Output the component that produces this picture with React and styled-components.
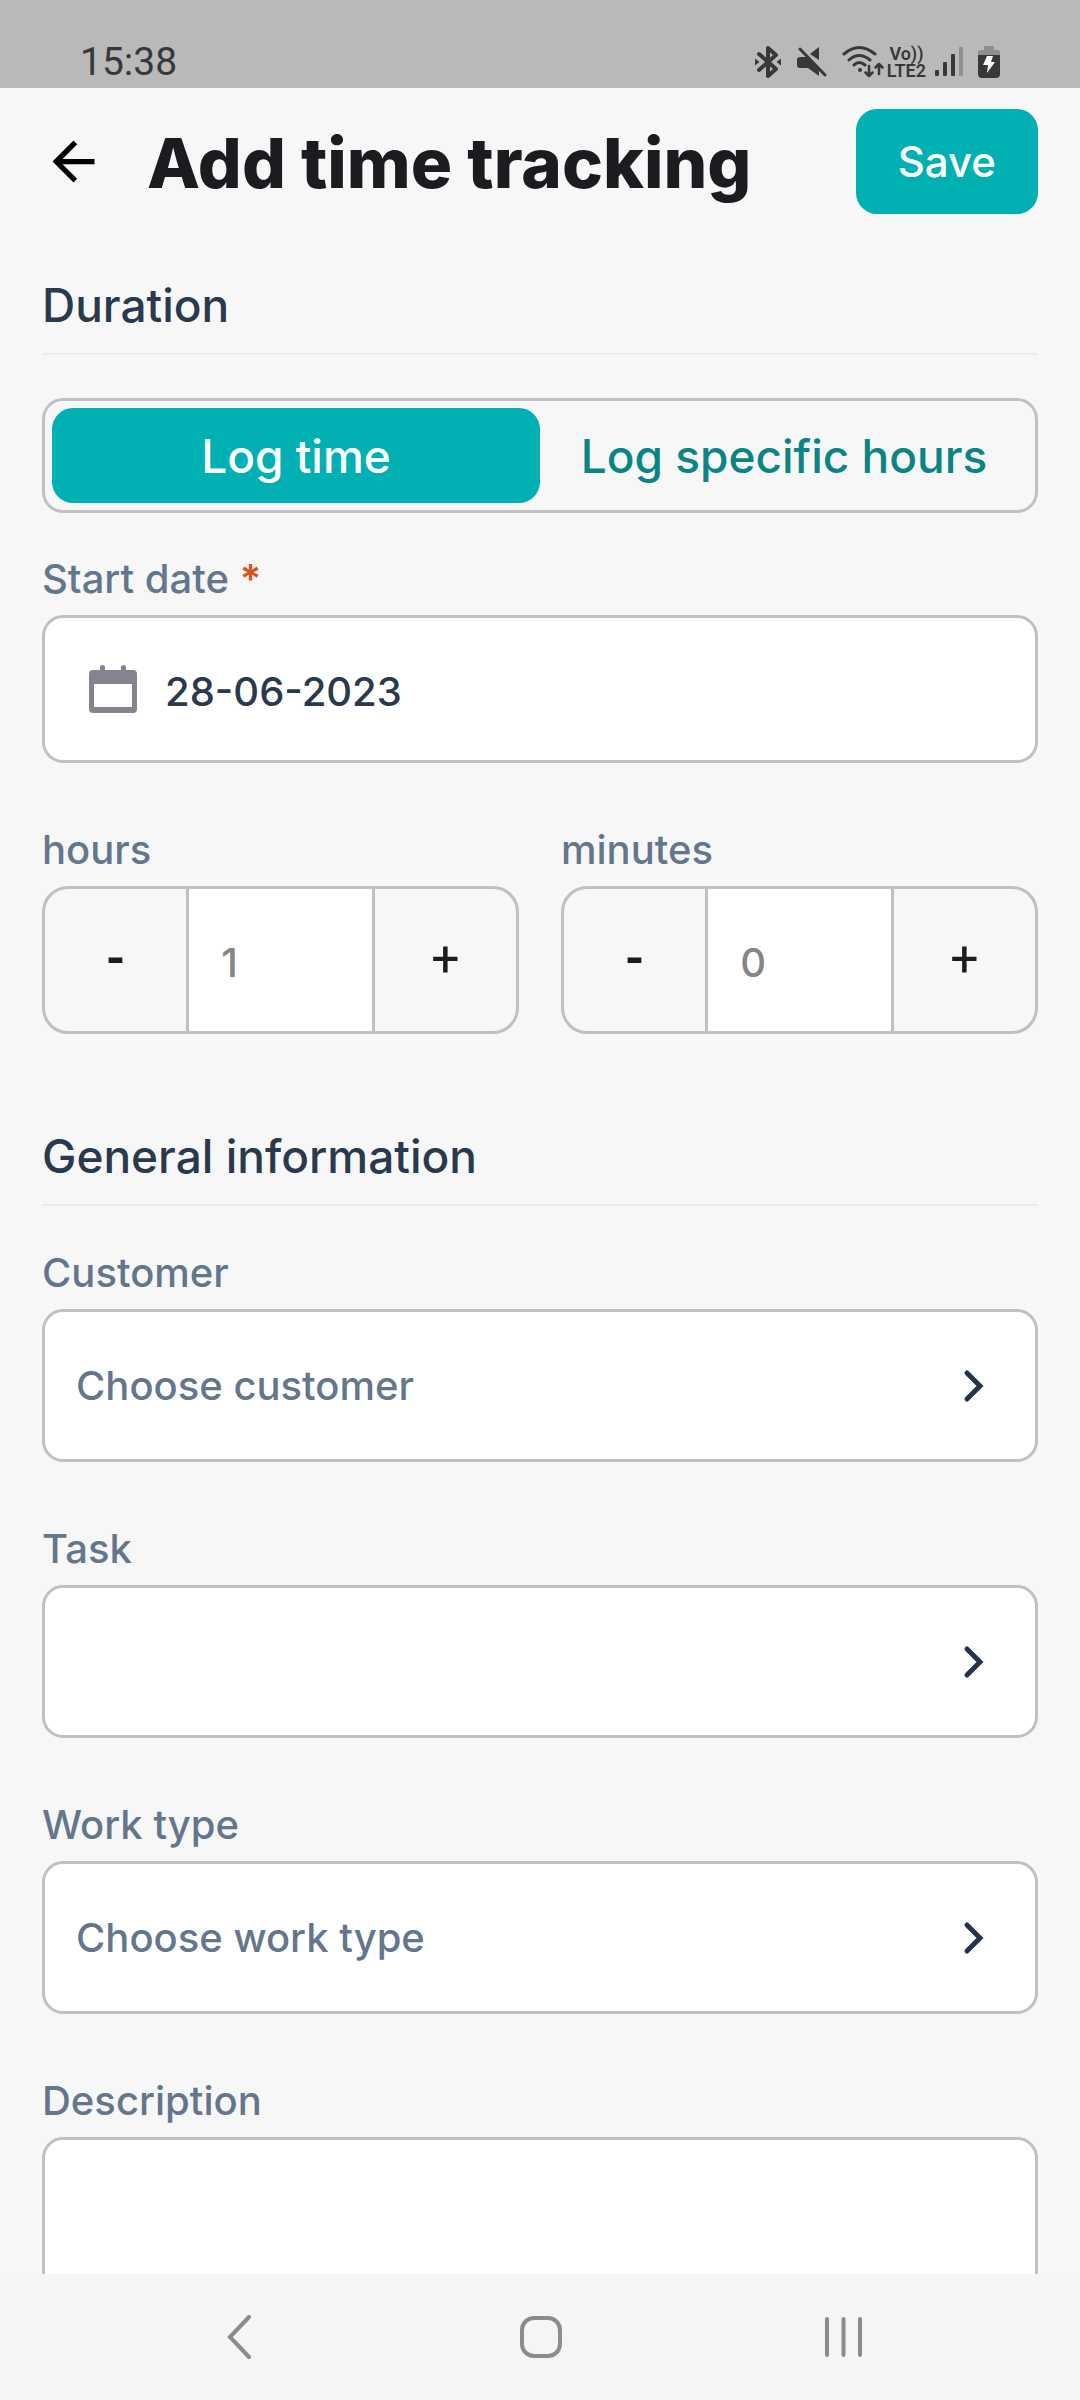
import { useState } from 'react'
import styled, { createGlobalStyle } from 'styled-components'

const workTypes = ['Development', 'Meeting', 'Support']
const customers = ['Internal']

function StatusIcons() {
    return (
        <Icons>
            <svg width="28" height="34" viewBox="0 0 28 34" fill="none" stroke="#383838" strokeWidth="4" strokeLinejoin="round" strokeLinecap="round">
                <path d="M5 9L22 24L14 31V3L22 10L5 25" />
                <path d="M1 13.500L5.500 17L1 20.500ZM27 13.500L22.500 17L27 20.500Z" fill="#383838" stroke="none" />
            </svg>
            <svg width="30" height="32" viewBox="0 0 30 32" fill="#383838">
                <path d="M22 1V14L13 8ZM3 11H10L22 22V30L11 22H3Q0 22 0 19V14Q0 11 3 11Z" />
                <path d="M3 3L28 29" fill="none" stroke="#383838" strokeWidth="3" strokeLinecap="round" />
            </svg>
            <svg width="42" height="34" viewBox="0 0 42 34" fill="none" stroke="#383838" strokeWidth="3" strokeLinecap="round" strokeLinejoin="round">
                <path d="M2 9Q17 -4 33 9M7 15Q17 6 28 15M12 20Q17 15 23 20" />
                <circle cx="18" cy="25" r="2" fill="#383838" stroke="none" />
                <path d="M27 21V31M23.500 27.500L27 31L30.500 27.500M37 29V19M33.500 22.500L37 19L40.500 22.500" strokeWidth="2.500" />
            </svg>
            <Network>
                <span>Vo))</span>
                <span>LTE2</span>
            </Network>
            <svg width="28" height="32" viewBox="0 0 28 32" fill="#383838">
                <rect x="0" y="24" width="4" height="6" rx="1" />
                <rect x="8" y="16" width="4" height="14" rx="1" />
                <rect x="16" y="8" width="4" height="22" rx="1" />
                <rect x="24" y="1" width="4" height="29" rx="1" fill="#8f8f8f" />
            </svg>
            <svg width="22" height="34" viewBox="0 0 22 34">
                <path d="M6 1H16V5H20Q22 5 22 7V12H0V7Q0 5 2 5H6Z" fill="#8f8f8f" />
                <path d="M0 10H22V29Q22 33 18 33H4Q0 33 0 29Z" fill="#383838" />
                <path d="M9 11H15L13 17H17L9 28L10 20H5Z" fill="#fff" />
            </svg>
        </Icons>
    )
}

function Stepper({ id, label, value, onChange }) {
    return (
        <Field>
            <Label htmlFor={id}>{label}</Label>
            <StepperBox>
                <StepButton type="button" $bold aria-label={`Decrease ${label}`} onClick={() => onChange(Math.max(0, value - 1))}>-</StepButton>
                <StepInput id={id} inputMode="numeric" value={value} onChange={(e) => onChange(Number(e.target.value) || 0)} />
                <StepButton type="button" aria-label={`Increase ${label}`} onClick={() => onChange(value + 1)}>+</StepButton>
            </StepperBox>
        </Field>
    )
}

function SelectField({ id, label, placeholder, options }) {
    return (
        <Field>
            <Label htmlFor={id}>{label}</Label>
            <SelectBox>
                <select id={id} defaultValue="">
                    <option value="">{placeholder}</option>
                    {options.map((option) => <option key={option}>{option}</option>)}
                </select>
                <svg width="22" height="34" viewBox="0 0 22 34" fill="none" stroke="#263449" strokeWidth="5" strokeLinecap="round">
                    <path d="M5 4L18 17L5 30" />
                </svg>
            </SelectBox>
        </Field>
    )
}

export default function App() {

    const [mode, setMode] = useState('time')
    const [date, setDate] = useState('28-06-2023')
    const [hours, setHours] = useState(1)
    const [minutes, setMinutes] = useState(0)

    return (
        <Screen>
            <GlobalStyle />
            <StatusBar>
                <span>15:38</span>
                <StatusIcons />
            </StatusBar>
            <Header>
                <BackButton type="button" aria-label="Back">
                    <svg width="63" height="63" viewBox="0 0 24 24">
                        <path d="M20 11H7.830l5.590-5.590L12 4l-8 8 8 8 1.410-1.410L7.830 13H20v-2z" />
                    </svg>
                </BackButton>
                <h1>Add time tracking</h1>
                <SaveButton type="button">Save</SaveButton>
            </Header>
            <Form>
                <SectionTitle>Duration</SectionTitle>
                <Segments>
                    <Segment type="button" aria-pressed={mode === 'time'} $active={mode === 'time'} onClick={() => setMode('time')}>Log time</Segment>
                    <Segment type="button" aria-pressed={mode === 'hours'} $active={mode === 'hours'} onClick={() => setMode('hours')}>Log specific hours</Segment>
                </Segments>
                <Fields>
                    <Field>
                        <Label htmlFor="start">Start date <b>*</b></Label>
                        <DateBox>
                            <svg width="48" height="48" viewBox="0 0 48 48" fill="#85838d">
                                <path fillRule="evenodd" d="M4 5H11V2.500A2.500 2.500 0 0 1 16 2.500V5H32V2.500A2.500 2.500 0 0 1 37 2.500V5H44Q48 5 48 9V44Q48 48 44 48H4Q0 48 0 44V9Q0 5 4 5ZM5 19V42H43V19Z" />
                            </svg>
                            <input id="start" value={date} onChange={(e) => setDate(e.target.value)} />
                        </DateBox>
                    </Field>
                    <Pair>
                        <Stepper id="hours" label="hours" value={hours} onChange={setHours} />
                        <Stepper id="minutes" label="minutes" value={minutes} onChange={setMinutes} />
                    </Pair>
                </Fields>
                <SectionTitle $spaced>General information</SectionTitle>
                <Fields>
                    <SelectField id="customer" label="Customer" placeholder="Choose customer" options={customers} />
                    <SelectField id="task" label="Task" placeholder="" options={[]} />
                    <SelectField id="worktype" label="Work type" placeholder="Choose work type" options={workTypes} />
                    <Field>
                        <Label htmlFor="description">Description</Label>
                        <TextArea id="description" />
                    </Field>
                </Fields>
            </Form>
            <NavBar>
                <button type="button" aria-label="Back">
                    <svg width="44" height="44" viewBox="0 0 44 44"><path d="M31 2L12 22L31 42" /></svg>
                </button>
                <button type="button" aria-label="Home">
                    <svg width="44" height="44" viewBox="0 0 44 44"><rect x="4" y="3" width="38" height="38" rx="12" /></svg>
                </button>
                <button type="button" aria-label="Recent apps">
                    <svg width="44" height="44" viewBox="0 0 44 44"><path d="M9 4V40M25.500 4V40M42 4V40" /></svg>
                </button>
            </NavBar>
        </Screen>
    )
}

const GlobalStyle = createGlobalStyle`
    *{
        box-sizing: border-box;
    }

    body{
        margin: 0;
        background-color: #f7f7f8;
    }

    body, button, input, select, textarea{
        font-family: Inter, sans-serif;
        font-size: 40px;
        font-weight: 500;
    }

    button{
        padding: 0;
        border: none;
        background: none;
        cursor: pointer;
    }

    svg{
        display: block;
        flex-shrink: 0;
    }
`

const Screen = styled.div`
    height: 100vh;
    display: flex;
    flex-direction: column;
`

const StatusBar = styled.div`
    display: flex;
    justify-content: space-between;
    align-items: center;
    height: 88px;
    padding: 36px 80px 0;
    flex-shrink: 0;
    background-color: #b9b9b9;
    color: #383838;
    font-family: Roboto, sans-serif;
    font-size: 39px;
    font-weight: 400;
`

const Icons = styled.div`
    display: flex;
    align-items: center;
    gap: 15px;
`

const Network = styled.div`
    display: flex;
    flex-direction: column;
    align-items: center;
    margin: 0 -6px 0 -12px;
    font-size: 18px;
    line-height: 17px;
    font-weight: 600;
`

const Header = styled.header`
    display: flex;
    align-items: center;
    padding: 21px 42px;
    flex-shrink: 0;

    h1{
        flex: 1;
        margin: 0 0 0 42px;
        padding-top: 2px;
        font-size: 69px;
        line-height: 84px;
        font-weight: 800;
        color: #1c1b20;
    }
`

const BackButton = styled.button`
    width: 63px;
    height: 63px;
`

const SaveButton = styled.button`
    height: 105px;
    padding: 0 42px;
    border-radius: 21px;
    background-color: #00b0b2;
    color: #fff;
    font-size: 42px;
`

const Form = styled.main`
    flex: 1;
    min-height: 0;
    padding: 42px 42px 0;
    overflow-y: auto;
    scrollbar-width: none;
`

const SectionTitle = styled.h2`
    margin: ${({ $spaced }) => $spaced ? '94px' : '0'} 0 43px;
    padding-bottom: 20px;
    border-bottom: 2px solid #ececee;
    font-size: 46px;
    line-height: 56px;
    font-weight: 500;
    color: #2a394c;
`

const Segments = styled.div`
    display: grid;
    grid-template-columns: 1fr 1fr;
    margin-bottom: 42px;
    padding: 7px;
    border: 3px solid #c0c0c6;
    border-radius: 21px;
`

const Segment = styled.button`
    height: 95px;
    border-radius: 21px;
    font-size: 46px;
    background-color: ${({ $active }) => $active ? '#00b0b2' : 'transparent'};
    color: ${({ $active }) => $active ? '#fff' : '#0b8583'};
`

const Fields = styled.div`
    display: flex;
    flex-direction: column;
    gap: 63px;
`

const Pair = styled.div`
    display: grid;
    grid-template-columns: 1fr 1fr;
    gap: 42px;
`

const Field = styled.div`
    display: flex;
    flex-direction: column;
    gap: 12px;
    min-width: 0;
`

const Label = styled.label`
    line-height: 48px;
    color: #64768c;

    b{
        font-weight: 600;
        color: #d9531e;
    }
`

const DateBox = styled.div`
    display: flex;
    align-items: center;
    gap: 28px;
    height: 148px;
    padding: 0 44px;
    border: 3px solid #c0c0c4;
    border-radius: 21px;
    background-color: #fff;

    input{
        flex: 1;
        min-width: 0;
        padding: 4px 0 0;
        border: none;
        background: none;
        color: #2a394c;
    }
`

const StepperBox = styled.div`
    display: grid;
    grid-template-columns: 3fr 4fr 3fr;
    height: 148px;
    border: 3px solid #c0c0c4;
    border-radius: 26px;
    overflow: hidden;
`

const StepButton = styled.button`
    padding-bottom: 2px;
    font-family: Roboto, sans-serif;
    font-size: 50px;
    font-weight: ${({ $bold }) => $bold ? 700 : 400};
    color: #1c1b20;
`

const StepInput = styled.input`
    width: 100%;
    min-width: 0;
    padding: 4px 32px 0;
    border: solid #c0c0c4;
    border-width: 0 3px;
    border-radius: 0;
    background-color: #fff;
    color: #858588;
`

const SelectBox = styled.div`
    position: relative;

    select{
        display: block;
        appearance: none;
        width: 100%;
        height: 153px;
        padding: 0 110px 0 31px;
        border: 3px solid #c0c0c4;
        border-radius: 21px;
        background-color: #fff;
        color: #64768c;
    }

    svg{
        position: absolute;
        top: 60px;
        right: 54px;
        pointer-events: none;
    }
`

const TextArea = styled.textarea`
    display: block;
    height: 320px;
    padding: 32px;
    border: 3px solid #c0c0c4;
    border-radius: 21px;
    background-color: #fff;
    color: #2a394c;
    resize: none;
`

const NavBar = styled.nav`
    display: flex;
    justify-content: space-around;
    align-items: center;
    height: 126px;
    padding: 0 90px;
    flex-shrink: 0;
    background-color: #f5f5f5;

    button{
        padding: 20px 60px;
    }

    svg{
        fill: none;
        stroke: #8c8c8c;
        stroke-width: 4;
        stroke-linecap: round;
    }
`
